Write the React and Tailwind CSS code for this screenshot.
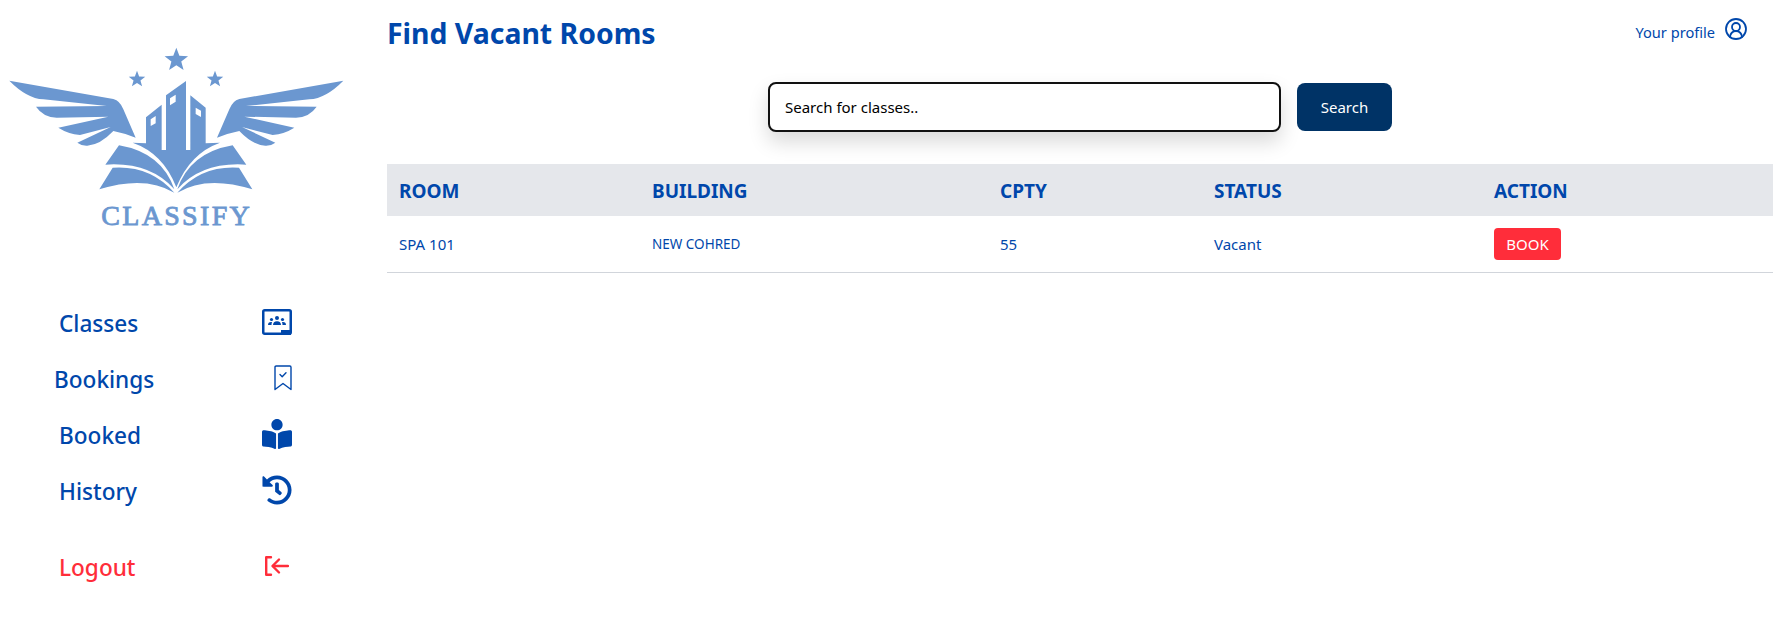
import React from "react";
import { FaBookReader, FaHistory } from "react-icons/fa";
import { CircleUserRound } from "lucide-react";

const star = (cx, cy, r) => {
  const pts = [];
  for (let i = 0; i < 10; i++) {
    const rad = i % 2 === 0 ? r : r * 0.42;
    const a = (Math.PI / 5) * i - Math.PI / 2;
    pts.push(`${cx + rad * Math.cos(a)},${cy + rad * Math.sin(a)}`);
  }
  return pts.join(" ");
};

const wing =
  "M28 152 L340 207 Q360 212 370 238 L407 323 Q375 310 340 303 Q300 345 262 347 Q245 348 232 338 L332 291 L240 315 Q205 312 175 293 L325 260 L170 263 Q130 262 108 230 L320 228 L130 208 Q80 205 28 152 Z";
const buildings =
  "M398 338 L438 340 L438 262 L485 224 L485 360 L498 360 L498 196 L558 153 L558 360 L571 360 L571 196 L617 233 L617 340 L660 338 Q570 370 529 472 Q490 370 398 338 Z";
const upperPage = "M357 346 Q485 368 523 478 Q450 395 316 404 Z";
const lowerPage = "M338 413 Q450 405 523 488 Q435 435 298 478 Z";

const Logo = () => (
  <svg viewBox="0 0 1080 660" className="w-[360px] h-[220px] shrink-0" fill="#6b97d0">
    <polygon points={star(529, 90, 37)} />
    <polygon points={star(411, 148, 26)} />
    <polygon points={star(645, 148, 26)} />
    <path d={wing} />
    <path d={wing} transform="translate(1058 0) scale(-1 1)" />
    <path d={buildings} />
    <g fill="#ffffff">
      <polygon points="452,268 467,258 467,280 452,288" />
      <polygon points="510,205 527,194 527,215 510,226" />
      <polygon points="587,233 603,242 603,261 587,252" />
    </g>
    <path d={upperPage} />
    <path d={lowerPage} />
    <path d={upperPage} transform="translate(1055 0) scale(-1 1)" />
    <path d={lowerPage} transform="translate(1055 0) scale(-1 1)" />
    <text
      x="530"
      y="586"
      textAnchor="middle"
      fontSize="84"
      letterSpacing="7"
      fontFamily="'Liberation Serif', serif"
      stroke="#6b97d0"
      strokeWidth="2.5"
    >
      CLASSIFY
    </text>
  </svg>
);

const ClassesIcon = () => (
  <svg width="30" height="26" viewBox="0 0 30 26" fill="#0047ab">
    <rect x="1.25" y="1.25" width="27.5" height="23.5" rx="1.5" fill="none" stroke="#0047ab" strokeWidth="2.5" />
    <rect x="19" y="21" width="10" height="5" />
    <circle cx="15" cy="9" r="2" />
    <circle cx="9.5" cy="10.5" r="1.6" />
    <circle cx="20.5" cy="10.5" r="1.6" />
    <path d="M11 16 Q11 12.2 15 12.2 Q19 12.2 19 16 Z" />
    <path d="M6 16 Q6 13 9 13 L10 13 Q9.5 14.5 9.5 16 Z" />
    <path d="M24 16 Q24 13 21 13 L20 13 Q20.5 14.5 20.5 16 Z" />
  </svg>
);

const BookingsIcon = () => (
  <svg width="18" height="26" viewBox="0 0 18 26" fill="none" stroke="#0047ab" strokeWidth="1.4" strokeLinejoin="round" strokeLinecap="round">
    <path d="M1 2.2 Q1 1 2.2 1 L15.8 1 Q17 1 17 2.2 L17 24.5 L9 18.5 L1 24.5 Z" />
    <path d="M6 9.5 L8.2 11.7 L12 7.8" />
  </svg>
);

const LogoutIcon = () => (
  <svg width="24" height="20" viewBox="0 0 24 20" fill="none" stroke="#ff2d3a" strokeWidth="2.4" strokeLinecap="round" strokeLinejoin="round">
    <path d="M6 1.2 L1.2 1.2 L1.2 18.8 L6 18.8" />
    <path d="M23 10 L8 10" />
    <path d="M14 3.5 L7.5 10 L14 16.5" />
  </svg>
);

const links = [
  { label: "Classes", left: "pl-[59px]", icon: <ClassesIcon /> },
  { label: "Bookings", left: "pl-[54px]", icon: <BookingsIcon /> },
  { label: "Booked", left: "pl-[59px]", icon: <FaBookReader size={30} color="#0047ab" /> },
  { label: "History", left: "pl-[59px]", icon: <FaHistory size={30} color="#0047ab" /> },
];

const NavRow = ({ label, left, icon, red }) => (
  <div className={`flex items-center justify-between h-[56px] pr-[95px] text-[22.6px] font-medium ${left} ${red ? "text-[#ff2d3a]" : "text-[#0047ab]"}`}>
    <span className="pt-[3px]">{label}</span>
    {icon}
  </div>
);

const Sidebar = () => (
  <aside className="w-[387px] shrink-0 pt-[30px]">
    <Logo />
    <nav className="mt-[44px]">
      {links.map((l) => (
        <NavRow key={l.label} {...l} />
      ))}
      <div className="mt-[20px]">
        <NavRow label="Logout" left="pl-[59px]" red icon={<div className="pr-[3px]"><LogoutIcon /></div>} />
      </div>
    </nav>
  </aside>
);

const App = () => {
  return (
    <div className="flex h-[627px] bg-white font-['Noto_Sans',sans-serif] text-[#0047ab]">
      <Sidebar />
      <main className="flex-1 pr-[11px]">
        <header className="flex items-start justify-between h-[82px] pt-[13px]">
          <h1 className="text-[28.4px] leading-[40px] font-bold">Find Vacant Rooms</h1>
          <div className="flex items-center gap-[9px] pr-[25px]">
            <span className="text-[14.6px] leading-[38px]">Your profile</span>
            <CircleUserRound size={24} strokeWidth={1.8} className="-mt-[6px]" />
          </div>
        </header>

        <div className="flex justify-center gap-[16px]">
          <input
            className="w-[513px] h-[50px] rounded-[8px] border-2 border-[#111] bg-white pl-[15px] text-[15px] text-black placeholder:text-black outline-none shadow-[0_10px_20px_rgba(0,0,0,0.15)]"
            placeholder="Search for classes.."
          />
          <button className="w-[95px] h-[48px] mt-[1px] rounded-[8px] bg-[#003366] text-white text-[15px]">Search</button>
        </div>

        <table className="w-full table-fixed mt-[32px] border-collapse">
          <thead>
            <tr className="h-[52px] bg-[#e5e7eb] text-left text-[19px] font-bold">
              <th className="w-[253px] pl-[12px] pt-[2px]">ROOM</th>
              <th className="w-[348px] pl-[12px] pt-[2px]">BUILDING</th>
              <th className="w-[214px] pl-[12px] pt-[2px]">CPTY</th>
              <th className="w-[280px] pl-[12px] pt-[2px]">STATUS</th>
              <th className="pl-[12px] pt-[2px]">ACTION</th>
            </tr>
          </thead>
          <tbody>
            <tr className="h-[56px] border-b border-[#d1d5db] text-[15px]">
              <td className="pl-[12px]">SPA 101</td>
              <td className="pl-[12px] text-[13.5px]">NEW COHRED</td>
              <td className="pl-[12px]">55</td>
              <td className="pl-[12px]">Vacant</td>
              <td className="pl-[12px]">
                <button className="w-[67px] h-[32px] rounded-[4px] bg-[#ff2d3a] text-white text-[15px]">BOOK</button>
              </td>
            </tr>
          </tbody>
        </table>
      </main>
    </div>
  );
};

export default App;
